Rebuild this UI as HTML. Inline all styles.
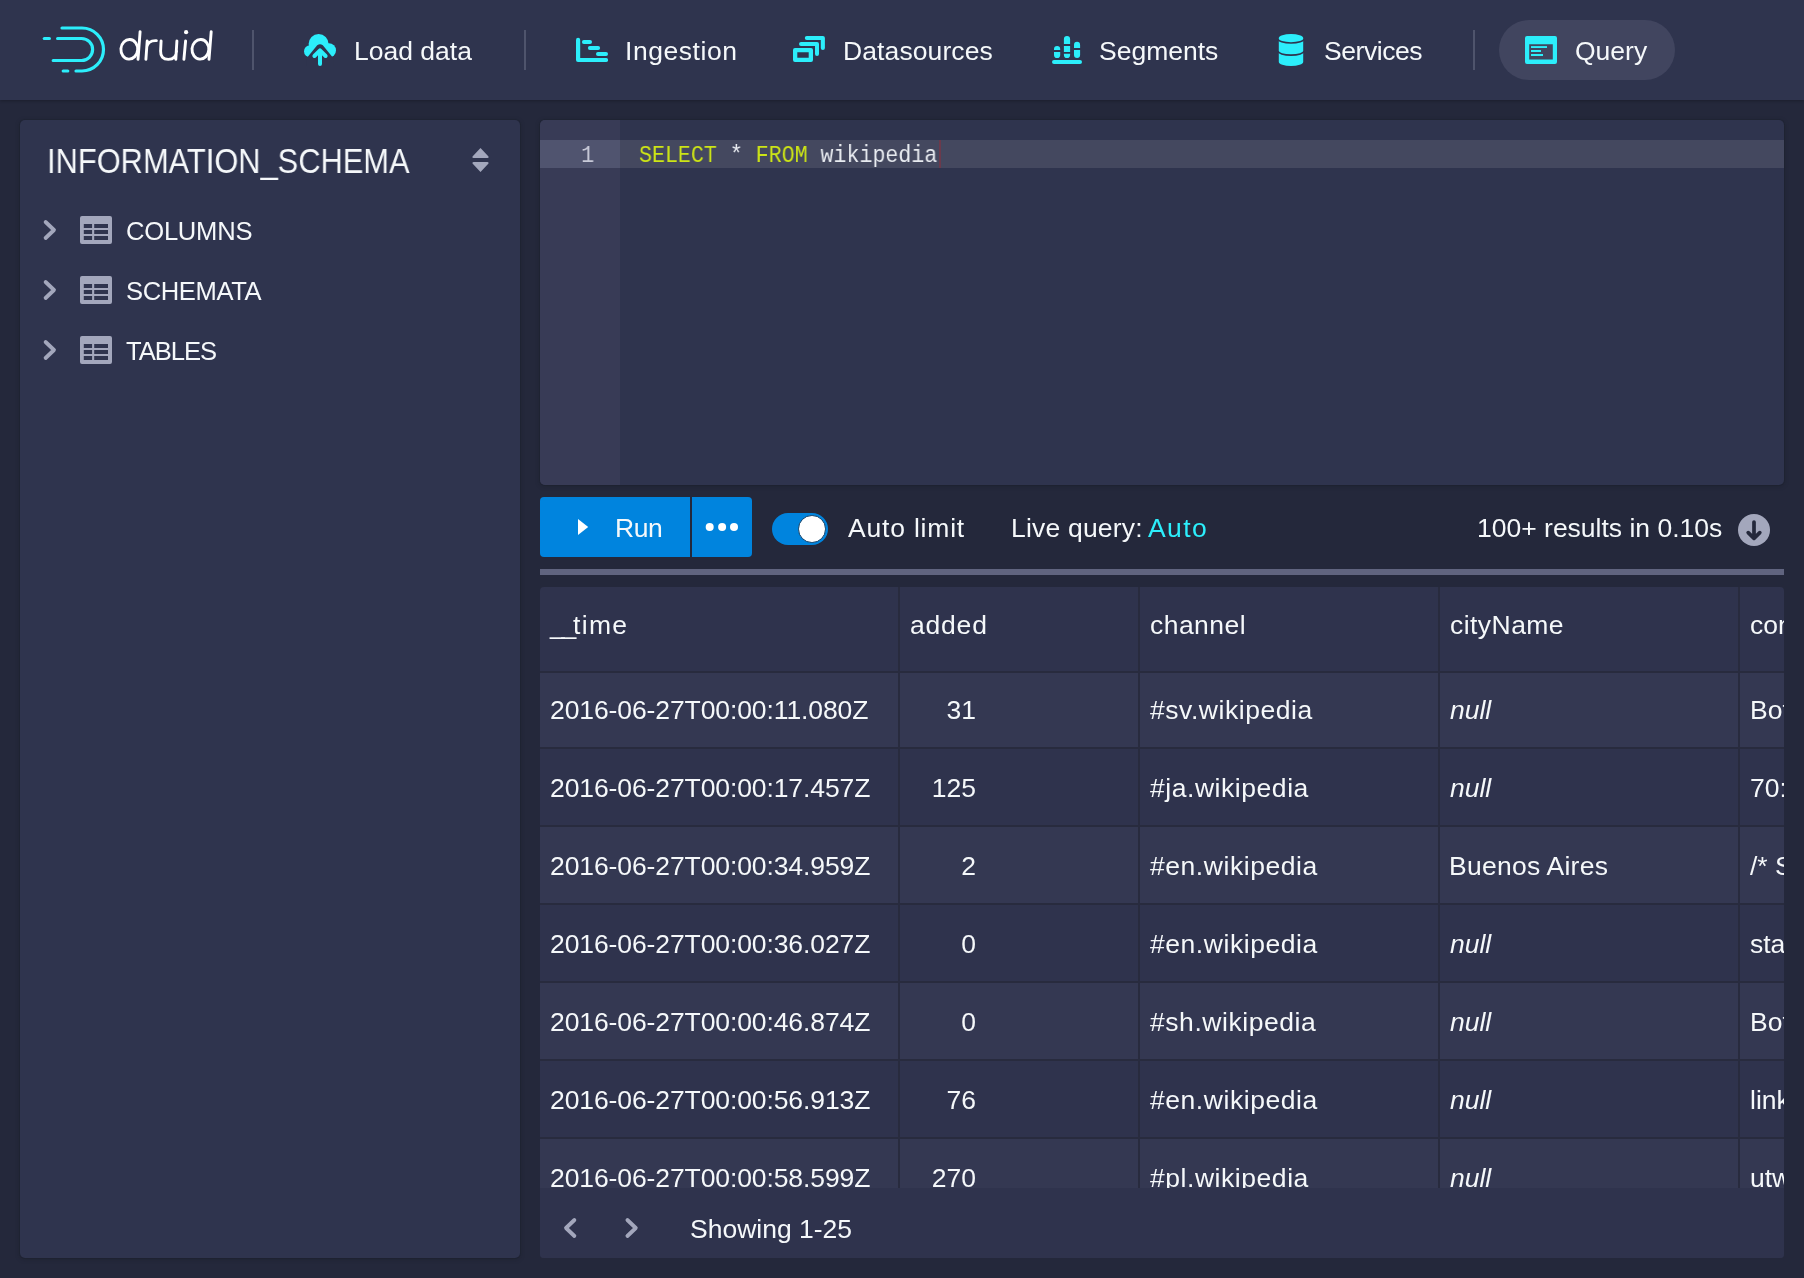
<!DOCTYPE html>
<html><head><meta charset="utf-8">
<style>
*{box-sizing:border-box;margin:0;padding:0}
html,body{width:1804px;height:1278px;overflow:hidden}
body{background:#24283b;position:relative;font-family:"Liberation Sans",sans-serif;color:#f5f8fa}
.a{position:absolute}
.t{position:absolute;white-space:nowrap;line-height:1;font-size:26.5px;will-change:transform}
#hdr{left:0;top:0;width:1804px;height:100px;background:#2f344e;box-shadow:0 1px 3px rgba(0,0,0,.25)}
.div{position:absolute;top:30px;width:2px;height:40px;background:#4f546c}
.panel{position:absolute;background:#2f344e;border-radius:5px;box-shadow:0 0 0 1px rgba(16,22,26,.12),0 1px 5px rgba(16,22,26,.28)}
</style></head>
<body>
<div id="hdr" class="a">
  <!-- logo -->
  <svg class="a" style="left:0;top:0" width="230" height="100" viewBox="0 0 230 100">
    <g fill="none" stroke="#2ceefb" stroke-width="3.2" stroke-linecap="round">
      <path d="M62 28 H82 A21.5 21.5 0 0 1 82 71 H76"/>
      <path d="M63.2 71 H67.8"/>
      <path d="M57.6 38.5 H81.6 A11 11 0 0 1 81.6 60.5 H53.2"/>
      <path d="M44.3 38.5 H49.4"/>
    </g>
    <g fill="none" stroke="#fff" stroke-width="2.9" stroke-linecap="round">
      <ellipse cx="129.3" cy="49.3" rx="8.4" ry="9.8" transform="rotate(4 129.3 49.3)"/>
      <path d="M140.1 31.6 L138 59.4"/>
      <path d="M147.2 41 L145.9 59.4 M146.7 47 Q148.2 40.2 156.4 40.6"/>
      <path d="M161.1 41 L160.6 51 Q160.4 59.4 168.3 59.4 Q176.2 59.4 176.6 51 M176.9 41 L175.8 59.4"/>
      <path d="M185.6 41 L183.9 59.4"/>
      <ellipse cx="200.4" cy="49.3" rx="8.4" ry="9.8" transform="rotate(4 200.4 49.3)"/>
      <path d="M211.2 31.6 L209 59.4"/>
    </g>
    <circle cx="186.1" cy="32.2" r="2.1" fill="#fff"/>
  </svg>
  <div class="div" style="left:252px"></div>
  <!-- Load data -->
  <svg class="a" style="left:304px;top:34px" width="32" height="32" viewBox="0 0 16 16">
    <g fill="#2ceefb">
      <circle cx="3" cy="8.6" r="3"/>
      <circle cx="7.3" cy="5" r="5"/>
      <circle cx="12.4" cy="8.2" r="3.6"/>
      <rect x="3" y="6" width="9.5" height="5.6"/>
    </g>
    <path d="M1.2 12.2 L6.6 5.6 Q8 4.6 9.4 5.6 L14.8 12.2 V16 H1.2Z" fill="#2f344e"/>
    <path d="M5.2 11 L8 8.2 L10.8 11 M8 8.5 V15" fill="none" stroke="#2ceefb" stroke-width="2" stroke-linecap="round" stroke-linejoin="round"/>
  </svg>
  <div class="t" style="left:354px;top:37.5px">Load data</div>
  <div class="div" style="left:524px"></div>
  <!-- Ingestion -->
  <svg class="a" style="left:576px;top:34px" width="32" height="32" viewBox="0 0 32 32">
    <g fill="#2ceefb">
      <path d="M2.1 3.8 A2.1 2.1 0 0 1 4.2 5.9 V24 H30 A2 2 0 0 1 30 28.1 H2 A2 2 0 0 1 0 26.1 V5.9 A2.1 2.1 0 0 1 2.1 3.8Z"/>
      <rect x="5.9" y="6.1" width="10.1" height="3.9" rx="1.95"/>
      <rect x="11.9" y="12.1" width="12.2" height="3.9" rx="1.95"/>
      <rect x="20" y="18.1" width="12" height="3.9" rx="1.95"/>
    </g>
  </svg>
  <div class="t" style="left:624.5px;top:37.5px;letter-spacing:0.55px">Ingestion</div>
  <!-- Datasources -->
  <svg class="a" style="left:793px;top:34px" width="32" height="32" viewBox="0 0 32 32">
    <g fill="#2ceefb">
      <path fill-rule="evenodd" d="M2 14 H18 A2 2 0 0 1 20 16 V26 A2 2 0 0 1 18 28 H2 A2 2 0 0 1 0 26 V16 A2 2 0 0 1 2 14Z M4.3 18.3 V23.8 H15.7 V18.3Z"/>
      <path d="M8 8 H24 A2 2 0 0 1 26 10 V20 A2 2 0 0 1 22 20 V12 H8 A2 2 0 0 1 8 8Z"/>
      <path d="M13.8 2 H29.9 A2 2 0 0 1 31.9 4 V14 A2 2 0 0 1 27.8 14 V6 H13.8 A2 2 0 0 1 13.8 2Z"/>
    </g>
  </svg>
  <div class="t" style="left:842.5px;top:37.5px;letter-spacing:0.1px">Datasources</div>
  <!-- Segments -->
  <svg class="a" style="left:1052px;top:34px" width="32" height="32" viewBox="0 0 32 32">
    <g fill="#2ceefb">
      <rect x="0" y="26" width="30" height="4" rx="2"/>
      <path d="M2 15 A3.1 3.1 0 0 1 8.2 15 V16.1 H2Z M2 17.9 H8.2 V21 A3.1 3.1 0 0 1 2 21Z"/>
      <path d="M11.9 5.1 A3.1 3.1 0 0 1 18.1 5.1 V10 H11.9Z M11.9 11.9 H18.1 V18.1 H11.9Z M11.9 19.8 H18.1 V21 A3.1 3.1 0 0 1 11.9 21Z"/>
      <path d="M22 10.9 A3.05 3.05 0 0 1 28.1 10.9 V14 H22Z M22 15.9 H28.1 V21 A3.05 3.05 0 0 1 22 21Z"/>
    </g>
  </svg>
  <div class="t" style="left:1099px;top:37.5px">Segments</div>
  <!-- Services -->
  <svg class="a" style="left:1275px;top:34px" width="32" height="32" viewBox="0 0 32 32">
    <path fill="#2ceefb" d="M3.8 4 A12.2 4 0 0 1 28.2 4 V28 A12.2 4 0 0 1 3.8 28Z"/>
    <path fill="none" stroke="#2f344e" stroke-width="1.6" d="M3 4.95 A13 4 0 0 0 29 4.95 M3 17.1 A13 4 0 0 0 29 17.1"/>
  </svg>
  <div class="t" style="left:1324px;top:37.5px;letter-spacing:-0.45px">Services</div>
  <div class="div" style="left:1473px"></div>
  <!-- Query active -->
  <div class="a" style="left:1499px;top:20px;width:176px;height:60px;border-radius:30px;background:#41455f"></div>
  <svg class="a" style="left:1525px;top:34px" width="32" height="32" viewBox="0 0 32 32">
    <path fill="#2ceefb" fill-rule="evenodd" d="M2 2 H30 A2 2 0 0 1 32 4 V28 A2 2 0 0 1 30 30 H2 A2 2 0 0 1 0 28 V4 A2 2 0 0 1 2 2Z M4.2 10.2 V25.6 H27.8 V10.2Z"/>
    <g fill="#2ceefb"><rect x="6" y="12.1" width="16" height="1.9"/><rect x="6" y="16" width="10" height="2"/><rect x="6" y="20" width="12" height="2"/></g>
  </svg>
  <div class="t" style="left:1575px;top:37.5px">Query</div>
</div>

<!-- left panel -->
<div class="panel" style="left:20px;top:120px;width:500px;height:1138px"></div>
<div class="t" style="left:46.8px;top:143px;font-size:35px;transform:scaleX(0.881);transform-origin:0 0">INFORMATION_SCHEMA</div>


<!-- tree -->
<svg class="a" style="left:472px;top:147px" width="17" height="26" viewBox="0 0 17 26">
  <path fill="#a3a7bc" d="M8.5 1 L16.5 9.5 Q17 11 15.5 11 H1.5 Q0 11 0.5 9.5Z M8.5 25 L16.5 16.5 Q17 15 15.5 15 H1.5 Q0 15 0.5 16.5Z"/>
</svg>
<svg class="a" style="left:40px;top:214px" width="20" height="32" viewBox="0 0 20 32"><path d="M5.6 8 L14 16 L5.6 24" fill="none" stroke="#a3a7bc" stroke-width="3.8" stroke-linecap="round" stroke-linejoin="round"/></svg>
<svg class="a" style="left:80px;top:214px" width="32" height="32" viewBox="0 0 32 32"><path fill="#a3a7bc" fill-rule="evenodd" d="M2 2 H30 A2 2 0 0 1 32 4 V28 A2 2 0 0 1 30 30 H2 A2 2 0 0 1 0 28 V4 A2 2 0 0 1 2 2Z M3.8 10.1 V14.1 H12.1 V10.1Z M14.2 10.1 V14.1 H28 V10.1Z M3.8 16.1 V20 H12.1 V16.1Z M14.2 16.1 V20 H28 V16.1Z M3.8 22 V26 H12.1 V22Z M14.2 22 V26 H28 V22Z"/></svg>
<div class="t" style="left:126px;top:218.6px;font-size:25.6px;letter-spacing:-0.25px">COLUMNS</div>
<svg class="a" style="left:40px;top:274px" width="20" height="32" viewBox="0 0 20 32"><path d="M5.6 8 L14 16 L5.6 24" fill="none" stroke="#a3a7bc" stroke-width="3.8" stroke-linecap="round" stroke-linejoin="round"/></svg>
<svg class="a" style="left:80px;top:274px" width="32" height="32" viewBox="0 0 32 32"><path fill="#a3a7bc" fill-rule="evenodd" d="M2 2 H30 A2 2 0 0 1 32 4 V28 A2 2 0 0 1 30 30 H2 A2 2 0 0 1 0 28 V4 A2 2 0 0 1 2 2Z M3.8 10.1 V14.1 H12.1 V10.1Z M14.2 10.1 V14.1 H28 V10.1Z M3.8 16.1 V20 H12.1 V16.1Z M14.2 16.1 V20 H28 V16.1Z M3.8 22 V26 H12.1 V22Z M14.2 22 V26 H28 V22Z"/></svg>
<div class="t" style="left:126px;top:278.6px;font-size:25.6px;letter-spacing:-0.4px">SCHEMATA</div>
<svg class="a" style="left:40px;top:334px" width="20" height="32" viewBox="0 0 20 32"><path d="M5.6 8 L14 16 L5.6 24" fill="none" stroke="#a3a7bc" stroke-width="3.8" stroke-linecap="round" stroke-linejoin="round"/></svg>
<svg class="a" style="left:80px;top:334px" width="32" height="32" viewBox="0 0 32 32"><path fill="#a3a7bc" fill-rule="evenodd" d="M2 2 H30 A2 2 0 0 1 32 4 V28 A2 2 0 0 1 30 30 H2 A2 2 0 0 1 0 28 V4 A2 2 0 0 1 2 2Z M3.8 10.1 V14.1 H12.1 V10.1Z M14.2 10.1 V14.1 H28 V10.1Z M3.8 16.1 V20 H12.1 V16.1Z M14.2 16.1 V20 H28 V16.1Z M3.8 22 V26 H12.1 V22Z M14.2 22 V26 H28 V22Z"/></svg>
<div class="t" style="left:126px;top:338.6px;font-size:25.6px;letter-spacing:-1.05px">TABLES</div>


<!-- editor -->
<div class="panel" style="left:540px;top:120px;width:1244px;height:365px;overflow:hidden">
  <div class="a" style="left:0;top:0;width:80px;height:365px;background:#383b56"></div>
  <div class="a" style="left:0;top:20px;width:80px;height:28px;background:#50546f"></div>
  <div class="a" style="left:80px;top:20px;width:1164px;height:28px;background:#44485f"></div>
  <div class="a" style="left:399px;top:20px;width:2px;height:28px;background:#6b3a4c"></div>
</div>
<div class="t" style="left:581px;top:144.4px;font-family:'Liberation Mono',monospace;font-size:24.5px;color:#c8cad8;transform:scaleX(0.9);transform-origin:0 0">1</div>
<div class="t" style="left:638.5px;top:144.4px;font-family:'Liberation Mono',monospace;font-size:24.5px;color:#e8ebf0;transform:scaleX(0.882);transform-origin:0 0"><span style="color:#cde516">SELECT</span> * <span style="color:#cde516">FROM</span> wikipedia</div>

<!-- run bar -->
<div class="a" style="left:540px;top:497px;width:150px;height:60px;background:#0084de;border-radius:4px 0 0 4px"></div>
<div class="a" style="left:692px;top:497px;width:60px;height:60px;background:#0084de;border-radius:0 4px 4px 0"></div>
<svg class="a" style="left:578px;top:519px" width="12" height="17" viewBox="0 0 12 17"><path d="M0 0 L10.2 8 L0 16Z" fill="#fff"/></svg>
<div class="t" style="left:615px;top:515px;letter-spacing:-0.5px">Run</div>
<svg class="a" style="left:700px;top:517px" width="44" height="20" viewBox="0 0 44 20"><g fill="#fff"><circle cx="9.7" cy="10" r="4"/><circle cx="22.1" cy="10" r="4"/><circle cx="34" cy="10" r="4"/></g></svg>
<div class="a" style="left:772px;top:513px;width:56px;height:32px;border-radius:16px;background:#0084de"></div>
<div class="a" style="left:798px;top:515.3px;width:27.6px;height:27.6px;border-radius:50%;background:#fff;border:1.8px solid #0c3e68"></div>
<div class="t" style="left:848px;top:515px;letter-spacing:0.8px">Auto limit</div>
<div class="t" style="left:1010.5px;top:515px;letter-spacing:0.2px">Live query:</div>
<div class="t" style="left:1148px;top:515px;letter-spacing:1.4px;color:#2ceefb">Auto</div>
<div class="t" style="left:1477px;top:515px">100+ results in 0.10s</div>
<svg class="a" style="left:1738px;top:514px" width="32" height="32" viewBox="0 0 32 32">
  <circle cx="16" cy="16" r="16" fill="#a3a7bc"/>
  <path d="M16 8 V24 M10.2 18.6 L16 24.4 L21.8 18.6" fill="none" stroke="#24283b" stroke-width="3.7" stroke-linecap="round" stroke-linejoin="round"/>
</svg>
<div class="a" style="left:540px;top:569px;width:1244px;height:6px;background:#60647f"></div>

<!-- table -->
<div class="a" style="left:540px;top:587px;width:1244px;height:671px;background:#2f334d;border-radius:4px;overflow:hidden">
<div class="a" style="left:0;top:86px;width:1244px;height:515px;overflow:hidden">
<div class="a" style="left:0;top:0px;width:1244px;height:74px;background:#343852"></div>
<div class="a" style="left:0;top:74px;width:1244px;height:2px;background:#282b3e"></div>
<div class="t" style="left:10px;top:23.8px;letter-spacing:-0.1px">2016-06-27T00:00:11.080Z</div>
<div class="t" style="left:300px;width:136px;text-align:right;top:23.8px">31</div>
<div class="t" style="left:610px;top:23.8px;letter-spacing:0.55px">#sv.wikipedia</div>
<div class="t" style="left:910px;top:23.8px;font-style:italic;">null</div>
<div class="t" style="left:1210px;top:23.8px">Bot: Fixing</div>
<div class="a" style="left:0;top:76px;width:1244px;height:76px;background:#2f334d"></div>
<div class="a" style="left:0;top:152px;width:1244px;height:2px;background:#282b3e"></div>
<div class="t" style="left:10px;top:101.8px;letter-spacing:-0.1px">2016-06-27T00:00:17.457Z</div>
<div class="t" style="left:300px;width:136px;text-align:right;top:101.8px">125</div>
<div class="t" style="left:610px;top:101.8px;letter-spacing:0.55px">#ja.wikipedia</div>
<div class="t" style="left:910px;top:101.8px;font-style:italic;">null</div>
<div class="t" style="left:1210px;top:101.8px">70:...</div>
<div class="a" style="left:0;top:154px;width:1244px;height:76px;background:#343852"></div>
<div class="a" style="left:0;top:230px;width:1244px;height:2px;background:#282b3e"></div>
<div class="t" style="left:10px;top:179.8px;letter-spacing:-0.1px">2016-06-27T00:00:34.959Z</div>
<div class="t" style="left:300px;width:136px;text-align:right;top:179.8px">2</div>
<div class="t" style="left:610px;top:179.8px;letter-spacing:0.55px">#en.wikipedia</div>
<div class="t" style="left:909px;top:179.8px;letter-spacing:0.25px">Buenos Aires</div>
<div class="t" style="left:1210px;top:179.8px">/* Section</div>
<div class="a" style="left:0;top:232px;width:1244px;height:76px;background:#2f334d"></div>
<div class="a" style="left:0;top:308px;width:1244px;height:2px;background:#282b3e"></div>
<div class="t" style="left:10px;top:257.8px;letter-spacing:-0.1px">2016-06-27T00:00:36.027Z</div>
<div class="t" style="left:300px;width:136px;text-align:right;top:257.8px">0</div>
<div class="t" style="left:610px;top:257.8px;letter-spacing:0.55px">#en.wikipedia</div>
<div class="t" style="left:910px;top:257.8px;font-style:italic;">null</div>
<div class="t" style="left:1210px;top:257.8px">status</div>
<div class="a" style="left:0;top:310px;width:1244px;height:76px;background:#343852"></div>
<div class="a" style="left:0;top:386px;width:1244px;height:2px;background:#282b3e"></div>
<div class="t" style="left:10px;top:335.8px;letter-spacing:-0.1px">2016-06-27T00:00:46.874Z</div>
<div class="t" style="left:300px;width:136px;text-align:right;top:335.8px">0</div>
<div class="t" style="left:610px;top:335.8px;letter-spacing:0.55px">#sh.wikipedia</div>
<div class="t" style="left:910px;top:335.8px;font-style:italic;">null</div>
<div class="t" style="left:1210px;top:335.8px">Bot: Fixing</div>
<div class="a" style="left:0;top:388px;width:1244px;height:76px;background:#2f334d"></div>
<div class="a" style="left:0;top:464px;width:1244px;height:2px;background:#282b3e"></div>
<div class="t" style="left:10px;top:413.8px;letter-spacing:-0.1px">2016-06-27T00:00:56.913Z</div>
<div class="t" style="left:300px;width:136px;text-align:right;top:413.8px">76</div>
<div class="t" style="left:610px;top:413.8px;letter-spacing:0.55px">#en.wikipedia</div>
<div class="t" style="left:910px;top:413.8px;font-style:italic;">null</div>
<div class="t" style="left:1210px;top:413.8px">link</div>
<div class="a" style="left:0;top:466px;width:1244px;height:76px;background:#343852"></div>
<div class="a" style="left:0;top:542px;width:1244px;height:2px;background:#282b3e"></div>
<div class="t" style="left:10px;top:491.8px;letter-spacing:-0.1px">2016-06-27T00:00:58.599Z</div>
<div class="t" style="left:300px;width:136px;text-align:right;top:491.8px">270</div>
<div class="t" style="left:610px;top:491.8px;letter-spacing:0.55px">#pl.wikipedia</div>
<div class="t" style="left:910px;top:491.8px;font-style:italic;">null</div>
<div class="t" style="left:1210px;top:491.8px">utworzenie</div>
</div>
<div class="a" style="left:0;top:84px;width:1244px;height:2px;background:#282b3e"></div>
<div class="t" style="left:10px;top:25.2px"><span style="letter-spacing:-3.2px">__</span><span style="letter-spacing:1.3px">time</span></div>
<div class="t" style="letter-spacing:0.8px;left:370px;top:25.2px">added</div>
<div class="t" style="left:610px;top:25.2px;letter-spacing:0.45px">channel</div>
<div class="t" style="left:910px;top:25.2px;letter-spacing:0.45px">cityName</div>
<div class="t" style="left:1210px;top:25.2px">comment</div>
<div class="a" style="left:358px;top:0;width:2px;height:601px;background:#282b3e"></div>
<div class="a" style="left:598px;top:0;width:2px;height:601px;background:#282b3e"></div>
<div class="a" style="left:898px;top:0;width:2px;height:601px;background:#282b3e"></div>
<div class="a" style="left:1198px;top:0;width:2px;height:601px;background:#282b3e"></div>
<div class="a" style="left:0;top:601px;width:1244px;height:70px;background:#2f334d"></div>
<svg class="a" style="left:20px;top:625px" width="120" height="32" viewBox="0 0 120 32"><path d="M14.4 8 L6 16 L14.4 24 M67.4 8 L75.8 16 L67.4 24" fill="none" stroke="#a3a7bc" stroke-width="3.8" stroke-linecap="round" stroke-linejoin="round"/></svg>
<div class="t" style="left:150px;top:629.2px">Showing 1-25</div>

</div>

</body></html>
